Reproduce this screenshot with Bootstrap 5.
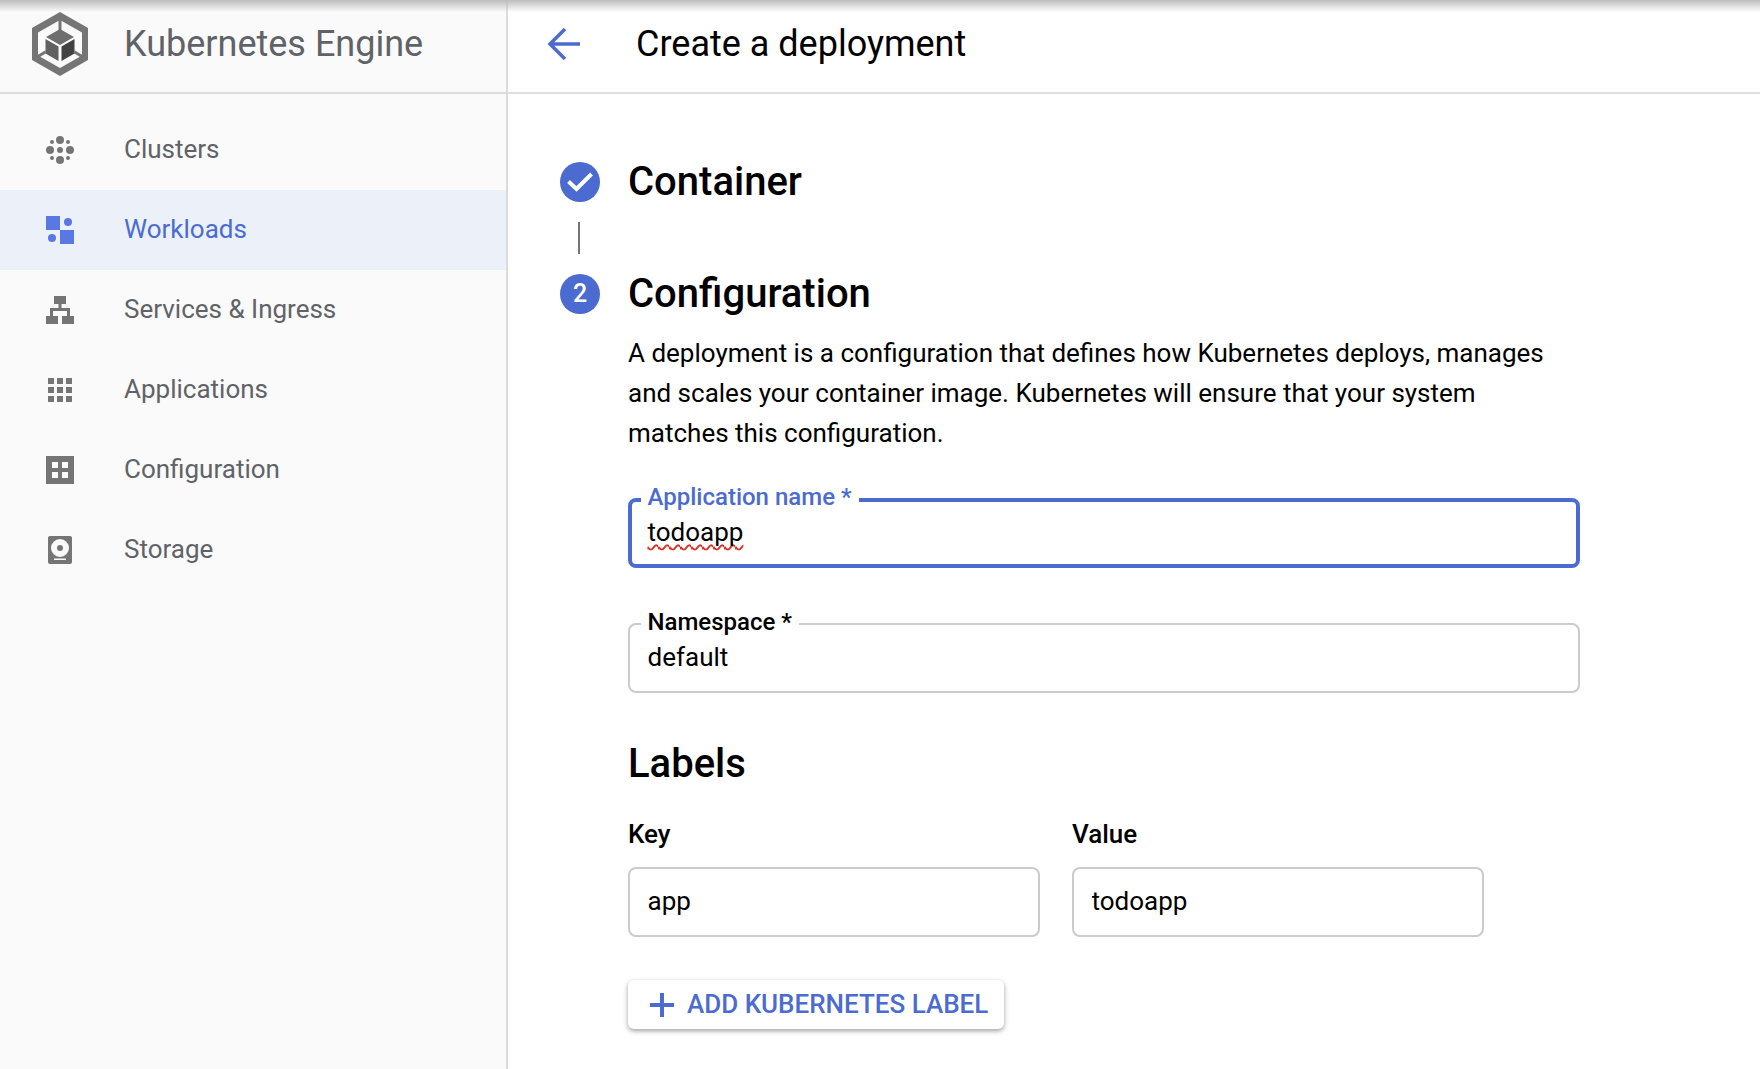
<!DOCTYPE html>
<html lang="en">
<head>
    <meta charset="UTF-8">
    <meta name="viewport" content="width=device-width, initial-scale=1.0">
    <title>Create a deployment - Kubernetes Engine</title>
    <link href="https://cdn.jsdelivr.net/npm/bootstrap@5.3.0/dist/css/bootstrap.min.css" rel="stylesheet">
    <style>
        html, body { height: 100%; overflow: hidden; }
        body { font-family: Roboto, "Liberation Sans", sans-serif; color: #000; background: #fff; }
        .app-shell { height: 1069px; }
        .top-fade { left: 0; right: 0; top: 0; height: 12px; background: linear-gradient(#bdbdbd, rgba(255,255,255,0)); z-index: 5; }
        .side-col { width: 508px; background: #fafafa; border-right: 2px solid #dcdcdc; }
        .side-head { height: 94px; border-bottom: 2px solid #dcdcdc; padding-left: 32px; }
        .side-head svg { width: 56px; height: 64px; margin-right: 36px; margin-top: -4px; }
        .product-name { font-size: 36px; color: #5f6368; margin-top: -4px; }
        .side-menu { padding-top: 16px; }
        .menu-row { height: 80px; padding-left: 46px; font-size: 26px; color: #5f6368; text-decoration: none; }
        .menu-row svg { width: 28px; height: 28px; margin-right: 50px; fill: #757575; flex: none; }
        .menu-text { margin-top: -2px; }
        .menu-row.active-row { background: #ecf0f9; color: #4b6cd0; }
        .menu-row.active-row svg { fill: #5a78e4; }
        .page-head { height: 94px; border-bottom: 2px solid #e0e0e0; padding-left: 39px; }
        .page-head svg { width: 34px; height: 34px; margin-right: 55px; margin-top: -4px; }
        .page-title { font-size: 36px; margin-top: -4px; }
        .main-body { padding-left: 52px; padding-top: 68px; }
        .step-dot { width: 40px; height: 40px; border-radius: 50%; background: #4b6bd0; color: #fff; font-size: 25px; font-weight: 500; flex: none; margin-right: 28px; }
        .step-title { font-size: 40px; font-weight: 500; line-height: 40px; margin: 0; }
        .step-bar { width: 2px; height: 32px; background: #757575; margin: 20px 0 20px 18px; }
        .step-body { padding-left: 68px; width: 1020px; }
        .step-text { font-size: 26px; line-height: 40px; margin: 19px 0 45px; width: 951px; }
        .notch-field { width: 952px; margin-bottom: 55px; }
        .notch-field + .notch-field { margin-bottom: 47px; }
        .notch-field .form-control { height: 70px; border: 2px solid #cbcbcb; border-radius: 8px; font-size: 26px; padding: 0 17.500px 2px; color: #000; box-shadow: none; }
        .notch-label { left: 12.500px; top: -16px; padding: 0 7px; background: #fff; font-size: 24px; font-weight: 500; line-height: 30px; }
        .notch-field.focused .form-control { border: 4px solid #4b6bd0; padding-left: 15.500px; }
        .notch-field.focused .notch-label { color: #4b6bd0; }
        .spell-typo { text-decoration: underline wavy #d93025 1.500px; text-decoration-skip-ink: none; text-underline-offset: 3px; }
        .labels-title { font-size: 40px; font-weight: 500; line-height: 48px; margin: 0 0 31px; }
        .label-grid { width: 856px; column-gap: 32px; display: grid; grid-template-columns: 412px 412px; }
        .key-label { font-size: 26px; font-weight: 500; line-height: 30px; margin-bottom: 18px; display: block; }
        .key-input { height: 70px; border: 2px solid #cbcbcb; border-radius: 8px; font-size: 26px; padding: 0 17.500px 2px; color: #000; }
        .add-btn { margin-top: 43px; width: 376px; height: 49px; background: #fff; border: 0; border-radius: 6px; color: #4b6bd0; font-size: 26px; font-weight: 500; padding: 0 0 0 21px; box-shadow: 0 2px 5px rgba(0,0,0,.38); }
        .add-btn:hover { background: #fff; color: #4b6bd0; }
        .add-btn svg { width: 26px; height: 26px; margin-right: 12px; }
    </style>
</head>

<body>
    <div class="app-shell d-flex position-relative">
        <div class="top-fade position-absolute"></div>

        <!-- left menu -->
        <aside class="side-col d-flex flex-column flex-shrink-0">
            <div class="side-head d-flex align-items-center">
                <svg viewBox="0 0 56 64">
                    <path fill="#757575" fill-rule="evenodd" d="M28 0 56 16V48L28 64 0 48V16ZM28 8 6 20.500V43.500L28 56 50 43.500V20.500Z"/>
                    <path fill="#757575" d="M26.500 7h3v12h-3z"/>
                    <path fill="#6e6e6e" d="M28 17 42 25 28 33 14 25Z"/>
                    <path fill="#616161" d="M13.500 27 26.500 34.500V49L13.500 41.500Z"/>
                    <path fill="#424242" d="M29.500 34.500 42.500 27V41.500L29.500 49Z"/>
                    <path fill="#757575" d="m4 44 9-5.500 1.500 2.500-9 5.500zM52 44l-9-5.500-1.500 2.500 9 5.500z"/>
                </svg>
                <span class="product-name">Kubernetes Engine</span>
            </div>
            <nav class="side-menu d-flex flex-column">
                <a href="#" class="menu-row d-flex align-items-center">
                    <svg viewBox="0 0 28 28"><circle cx="14" cy="4" r="4"/><circle cx="14" cy="24" r="4"/><circle cx="4" cy="14" r="4"/><circle cx="24" cy="14" r="4"/><circle cx="14" cy="14" r="3"/><circle cx="6" cy="6" r="2"/><circle cx="22" cy="6" r="2"/><circle cx="6" cy="22" r="2"/><circle cx="22" cy="22" r="2"/></svg>
                    <span class="menu-text">Clusters</span>
                </a>
                <a href="#" class="menu-row active-row d-flex align-items-center">
                    <svg viewBox="0 0 28 28"><path d="M0 0h14v14H0zM14 14h14v14H14z"/><circle cx="22" cy="6" r="4"/><circle cx="6" cy="22" r="4"/></svg>
                    <span class="menu-text">Workloads</span>
                </a>
                <a href="#" class="menu-row d-flex align-items-center">
                    <svg viewBox="0 0 28 28"><path d="M8 0h12v8h-4.500v4H24v8h4v8H16v-8h5v-5H7v5h5v8H0v-8h4v-8h8.500V8H8z"/></svg>
                    <span class="menu-text">Services &amp; Ingress</span>
                </a>
                <a href="#" class="menu-row d-flex align-items-center">
                    <svg viewBox="0 0 28 28"><path d="M2 2h6v6H2zM11 2h6v6h-6zM20 2h6v6h-6zM2 11h6v6H2zM11 11h6v6h-6zM20 11h6v6h-6zM2 20h6v6H2zM11 20h6v6h-6zM20 20h6v6h-6z"/></svg>
                    <span class="menu-text">Applications</span>
                </a>
                <a href="#" class="menu-row d-flex align-items-center">
                    <svg viewBox="0 0 28 28"><path fill-rule="evenodd" d="M0 0h28v28H0zM6 6v6h6V6zM16 6v6h6V6zM6 16v6h6v-6zM16 16v6h6v-6z"/></svg>
                    <span class="menu-text">Configuration</span>
                </a>
                <a href="#" class="menu-row d-flex align-items-center">
                    <svg viewBox="0 0 28 28"><path fill-rule="evenodd" d="M4 0h20a2 2 0 0 1 2 2v24a2 2 0 0 1-2 2H4a2 2 0 0 1-2-2V2a2 2 0 0 1 2-2ZM14 3a9 9 0 1 0 0 18 9 9 0 0 0 0-18ZM8 22.500V24h12v-1.500Z"/><circle cx="14" cy="12" r="3"/></svg>
                    <span class="menu-text">Storage</span>
                </a>
            </nav>
        </aside>

        <!-- page content -->
        <main class="flex-grow-1">
            <div class="page-head d-flex align-items-center">
                <svg viewBox="0 0 34 34" fill="none" stroke="#4b6bd0" stroke-width="3.500"><path d="M33 17H3M18 2 3 17l15 15"/></svg>
                <span class="page-title">Create a deployment</span>
            </div>
            <div class="main-body">
                <div class="d-flex align-items-center">
                    <span class="step-dot d-flex align-items-center justify-content-center">
                        <svg width="26" height="20" viewBox="0 0 26 20" fill="none" stroke="#fff" stroke-width="4"><path d="M1.500 9.500 9.500 17 24.500 2"/></svg>
                    </span>
                    <h2 class="step-title">Container</h2>
                </div>
                <div class="step-bar"></div>
                <div class="d-flex align-items-center">
                    <span class="step-dot d-flex align-items-center justify-content-center">2</span>
                    <h2 class="step-title">Configuration</h2>
                </div>
                <div class="step-body">
                    <p class="step-text">A deployment is a configuration that defines how Kubernetes deploys, manages and scales your container image. Kubernetes will ensure that your system matches this configuration.</p>
                    <div class="notch-field focused position-relative">
                        <span class="notch-label position-absolute">Application name *</span>
                        <!-- div not input, an input clips the wavy underline -->
                        <div class="form-control d-flex align-items-center"><span class="spell-typo">todoapp</span></div>
                    </div>
                    <div class="notch-field position-relative">
                        <label class="notch-label position-absolute" for="nsName">Namespace *</label>
                        <input id="nsName" type="text" class="form-control" value="default">
                    </div>
                    <h2 class="labels-title">Labels</h2>
                    <div class="label-grid">
                        <div>
                            <label class="key-label" for="labelKey">Key</label>
                            <input id="labelKey" type="text" class="form-control key-input" value="app">
                        </div>
                        <div>
                            <label class="key-label" for="labelValue">Value</label>
                            <input id="labelValue" type="text" class="form-control key-input" value="todoapp">
                        </div>
                    </div>
                    <button type="button" class="btn add-btn d-flex align-items-center text-nowrap">
                        <svg viewBox="0 0 26 26" fill="#4b6bd0"><path d="M11 1h4v10h10v4H15v10h-4V15H1v-4h10z"/></svg>
                        ADD KUBERNETES LABEL
                    </button>
                </div>
            </div>
        </main>
    </div>

    <script src="https://cdn.jsdelivr.net/npm/bootstrap@5.3.0/dist/js/bootstrap.bundle.min.js"></script>
</body>
</html>
